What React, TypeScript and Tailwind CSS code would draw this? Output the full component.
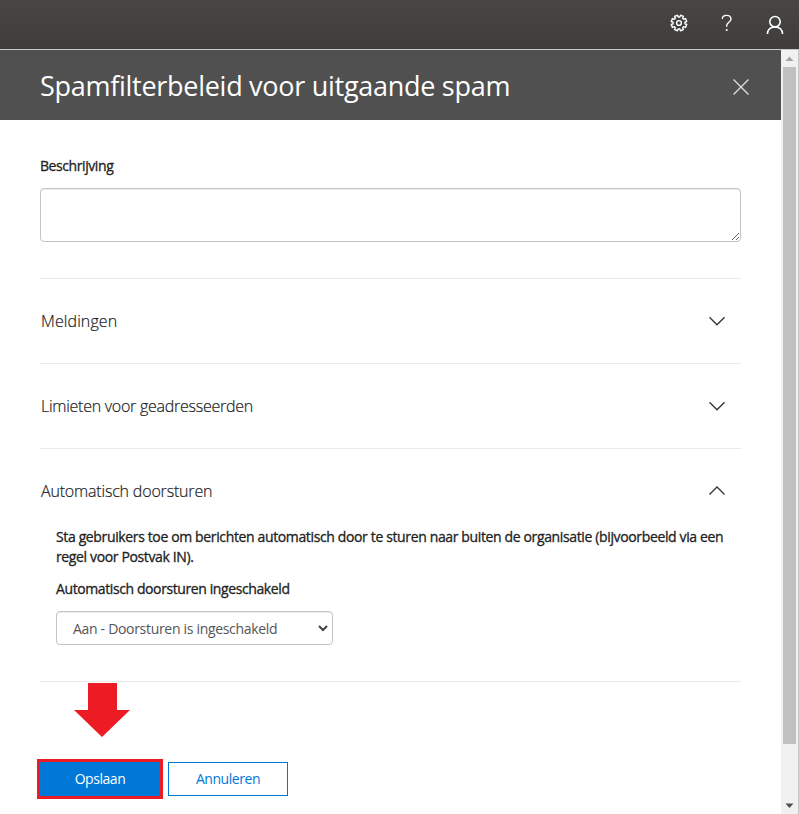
import { useState } from "react";

function Chevron({ open }: { open: boolean }) {
  return (
    <svg
      width="18"
      height="10"
      viewBox="0 0 18 10"
      fill="none"
      stroke="#333"
      strokeWidth="1.3"
      className={open ? "mr-[15px]" : "mr-[15px]"}
    >
      <path d={open ? "M1.5 8.5 9 1 16.5 8.5" : "M1.5 1.3 9 8.8 16.5 1.3"} />
    </svg>
  );
}

function gearPath() {
  const pts: string[] = [];
  const n = 8;
  for (let i = 0; i < n; i++) {
    const a = ((i + 0.5) * 2 * Math.PI) / n;
    [
      [-0.26, 6],
      [-0.2, 7.9],
      [0.2, 7.9],
      [0.26, 6],
    ].forEach(([d, r]) => {
      pts.push(`${(9 + r * Math.sin(a + d)).toFixed(2)} ${(9 - r * Math.cos(a + d)).toFixed(2)}`);
    });
  }
  return `M${pts.join("L")}Z`;
}

function TopBar() {
  return (
    <header className="flex h-[50px] items-start border-b border-[#c8c8c8] bg-linear-to-b from-[#484644] to-[#3e3d3c] text-white">
      <div className="ml-auto flex pt-[14px]">
        <svg width="18" height="18" viewBox="0 0 18 18" fill="none" stroke="white" strokeWidth="1.4" strokeLinejoin="round" className="mr-[33px]">
          <path d={gearPath()} />
          <circle cx="9" cy="9" r="2.4" />
        </svg>
        <svg width="12" height="18" viewBox="0 0 12 18" fill="none" stroke="white" strokeWidth="1.4" className="mr-[33px]">
          <path d="M1.3 4.9C1.4 2.7 3.1 1.4 5.6 1.4 8.3 1.4 10 2.8 10 5 10 8 5.7 8.4 5.7 11.6V12.8" />
          <path d="M5.7 15.1V16.9" strokeWidth="1.7" />
        </svg>
        <svg width="18" height="22" viewBox="0 0 18 22" fill="none" stroke="white" strokeWidth="1.6" className="mr-[15px]">
          <circle cx="9" cy="7.7" r="5.2" />
          <path d="M1.4 20C1.7 15.8 4.6 13 9 13S16.3 15.8 16.6 20" />
        </svg>
      </div>
    </header>
  );
}

function Section({
  title,
  open,
  tracking,
  onToggle,
}: {
  title: string;
  open: boolean;
  tracking: string;
  onToggle: () => void;
}) {
  return (
    <button
      type="button"
      onClick={onToggle}
      className="flex h-[85px] w-full items-center justify-between border-t border-[#eaeaea] pl-px text-left text-base font-light text-[#222] [-webkit-text-stroke:0.2px]"
    >
      <span className={tracking}>{title}</span>
      <Chevron open={open} />
    </button>
  );
}

function Scrollbar() {
  return (
    <div className="flex w-[18px] flex-col items-center border-r border-[#c8c8c8] bg-[#f1f1f1]">
      <svg width="17" height="17" viewBox="0 0 17 17">
        <path d="M4.5 11 8.5 6.5 12.5 11Z" fill="#a3a3a3" />
      </svg>
      <div className="-ml-px h-[677px] w-[13px] bg-[#c1c1c1]" />
      <svg width="17" height="17" viewBox="0 0 17 17" className="mt-auto">
        <path d="M4.5 6.5 8.5 11 12.5 6.5Z" fill="#505050" />
      </svg>
    </div>
  );
}

export default function App() {
  const [open, setOpen] = useState([false, false, true]);
  const toggle = (i: number) => setOpen(open.map((v, j) => (j === i ? !v : v)));
  return (
    <div className="flex h-[814px] w-[799px] flex-col overflow-hidden bg-white font-['Open_Sans','Noto_Sans',sans-serif] text-sm text-[#222]">
      <TopBar />
      <div className="flex flex-1">
        <main className="w-[781px]">
          <div className="flex h-[70px] items-center justify-between bg-[#505050] pr-[31px] pl-10 text-white">
            <h1 className="pt-[3px] text-[27px] tracking-[-0.28px] whitespace-nowrap">Spamfilterbeleid voor uitgaande spam</h1>
            <svg width="18" height="18" viewBox="0 0 18 18" stroke="#ddd" strokeWidth="1.4" className="mt-[3px]">
              <path d="M1.5 1.5 16.5 16.5M16.5 1.5 1.5 16.5" />
            </svg>
          </div>
          <div className="px-10 pt-9">
            <label htmlFor="desc" className="block leading-5 tracking-[-0.42px] [-webkit-text-stroke:0.3px]">
              Beschrijving
            </label>
            <textarea id="desc" className="mt-3 block h-[54px] w-[701px] rounded border border-[#c4c4c4] bg-white shadow-[inset_0_1px_1px_rgba(0,0,0,0.075)]" />
            <div className="mt-9">
              <Section title="Meldingen" tracking="tracking-[0.1px]" open={open[0]} onToggle={() => toggle(0)} />
              <Section title="Limieten voor geadresseerden" tracking="tracking-[-0.26px]" open={open[1]} onToggle={() => toggle(1)} />
              <Section title="Automatisch doorsturen" tracking="tracking-[-0.18px]" open={open[2]} onToggle={() => toggle(2)} />
            </div>
            <div className="-mt-[6px] h-[155px] border-b border-[#eaeaea] pl-4">
              <p className="leading-5 tracking-[-0.364px] whitespace-nowrap [-webkit-text-stroke:0.3px]">
                <span>Sta gebruikers toe om berichten automatisch door te sturen naar buiten de organisatie (bijvoorbeeld via een</span>
                <br />
                <span>regel voor Postvak IN).</span>
              </p>
              <p className="mt-3 leading-5 tracking-[-0.4px] [-webkit-text-stroke:0.3px]">Automatisch doorsturen ingeschakeld</p>
              <div className="mt-3 flex h-[34px] w-[277px] items-center justify-between rounded border border-[#c4c4c4] pr-1 pl-4 text-[#555] shadow-[inset_0_1px_1px_rgba(0,0,0,0.075)]">
                <span className="pt-0.5 tracking-[-0.31px]">Aan - Doorsturen is ingeschakeld</span>
                <svg width="10" height="7" viewBox="0 0 10 7" fill="none" stroke="#444" strokeWidth="2">
                  <path d="M1 1 5 5 9 1" />
                </svg>
              </div>
            </div>
            <svg width="56" height="54" viewBox="0 0 56 54" className="mt-px ml-[34px]">
              <path d="M14 0H43V27H56L28 54 0 27H14Z" fill="#ed1c24" />
            </svg>
            <div className="mt-[22px] -ml-[3px] flex items-center gap-[5px]">
              <button type="button" className="flex h-10 w-[126px] items-center justify-center border-3 border-[#ed1c24] bg-[#0078d7] tracking-[-0.45px] text-white">
                Opslaan
              </button>
              <button type="button" className="flex h-[34px] w-[120px] items-center justify-center border border-[#0078d7] bg-white tracking-[-0.45px] text-[#0078d7]">
                Annuleren
              </button>
            </div>
          </div>
        </main>
        <Scrollbar />
      </div>
    </div>
  );
}
